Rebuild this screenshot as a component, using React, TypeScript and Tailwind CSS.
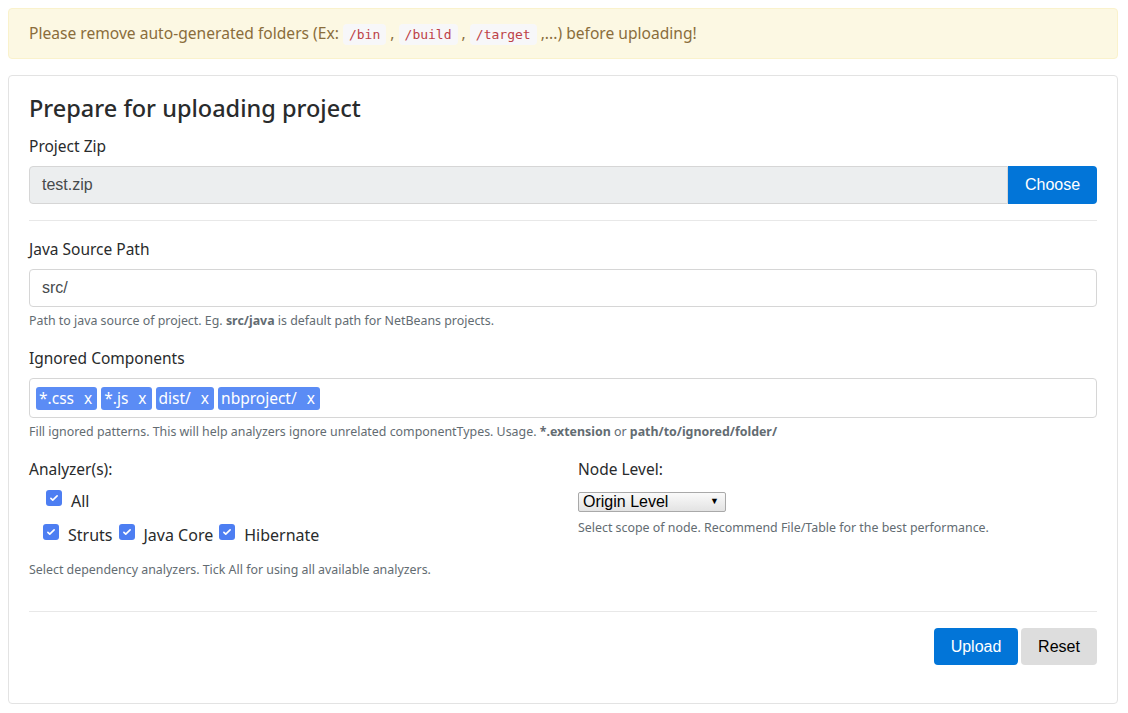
import React from 'react';

const ui = "font-['Noto_Sans',sans-serif]";
const arial = "font-['Liberation_Sans',Arial,sans-serif]";

function Code({ children }: { children: React.ReactNode }) {
  return (
    <code className="rounded bg-[#f7f7f9] px-[6px] py-[3px] font-['DejaVu_Sans_Mono',monospace] text-[13px] leading-none text-[#bd4147]">
      {children}
    </code>
  );
}

function Tag({ label }: { label: string }) {
  return (
    <span className="flex h-[23px] items-center rounded-[3px] bg-[#5b8cf5] pl-[3px] pr-[5px] text-[15.5px] leading-[23px] text-white">
      {label}
      <span className="ml-[10px]">x</span>
    </span>
  );
}

function Check({ label }: { label: string }) {
  return (
    <label className="flex items-center">
      <span className="mb-[6px] flex h-4 w-4 items-center justify-center rounded-[3px] bg-[#4d7ef2]">
        <svg viewBox="0 0 16 16" className="h-[10px] w-[10px]" fill="none" stroke="white" strokeWidth="2.6" strokeLinecap="round" strokeLinejoin="round">
          <path d="M3 8.5l3 3 7-7" />
        </svg>
      </span>
      <span className="ml-[9px] text-[16px] leading-6 text-[#292b2c]">{label}</span>
    </label>
  );
}

export default function App() {
  return (
    <div className={`${ui} min-h-[713px] bg-white pb-2 pl-2 pr-[10px] pt-2 text-[#292b2c]`}>
      {/* Warning */}
      <div className="mb-4 h-[51px] rounded border border-[#faf2cc] bg-[#fcf8e3] px-5 py-[12px] text-[15.6px] leading-6 text-[#8a6d3b]">
        Please remove auto-generated folders (Ex: <Code>/bin</Code> , <Code>/build</Code> , <Code>/target</Code> ,...) before uploading!
      </div>

      {/* Card */}
      <div className="rounded border border-[#e3e3e3] px-5 pb-[38px] pt-5">
        <h3 className="mb-[14px] text-[23.5px] font-medium leading-6 text-[#292b2c]">Prepare for uploading project</h3>

        <label className="mb-2 block text-[15.5px] leading-6">Project Zip</label>
        <div className="flex h-[38px]">
          <div className={`${arial} flex flex-1 items-center rounded-l border border-[#d6d6d6] bg-[#eceeef] px-3 text-[16px] text-[#464a4c]`}>
            test.zip
          </div>
          <button className={`${arial} w-[89px] rounded-r bg-[#0275d8] text-[16px] text-white`}>Choose</button>
        </div>

        <hr className="my-4 border-[#e8e8e8]" />

        <label className="mb-2 block text-[15.5px] leading-6">Java Source Path</label>
        <div className={`${arial} flex h-[38px] items-center rounded border border-[#d6d6d6] px-3 text-[16px] text-[#464a4c]`}>src/</div>
        <p className="mt-1 text-[12.4px] leading-[19px] text-[#636c72]">
          Path to java source of project. Eg. <b>src/java</b> is default path for NetBeans projects.
        </p>

        <label className="mb-2 mt-4 block text-[15.5px] leading-6">Ignored Components</label>
        <div className="flex h-10 items-center gap-[4px] rounded border border-[#d6d6d6] px-[6px]">
          <Tag label="*.css" />
          <Tag label="*.js" />
          <Tag label="dist/" />
          <Tag label="nbproject/" />
        </div>
        <p className="mt-1 text-[12.4px] leading-[19px] text-[#636c72]">
          Fill ignored patterns. This will help analyzers ignore unrelated componentTypes. Usage. <b>*.extension</b> or <b>path/to/ignored/folder/</b>
        </p>

        <div className="mt-4 grid grid-cols-2 gap-[30px]">
          <div>
            <label className="mb-2 block text-[15.5px] leading-6">Analyzer(s):</label>
            <div className="ml-[17px] mt-[6px]">
              <Check label="All" />
            </div>
            <div className="ml-[14px] mt-[10px] flex gap-[6px]">
              <Check label="Struts" />
              <Check label="Java Core" />
              <Check label="Hibernate" />
            </div>
            <p className="mt-[13px] text-[12.4px] leading-[19px] text-[#636c72]">
              Select dependency analyzers. Tick All for using all available analyzers.
            </p>
          </div>
          <div>
            <label className="mb-[11px] block text-[15.5px] leading-6">Node Level:</label>
            <div className={`${arial} flex h-5 w-[148px] items-center justify-between rounded-[2px] border border-[#a9a9a9] bg-gradient-to-b from-[#fafafa] to-[#e3e3e3] pl-[4px] pr-[6px] text-[16px] text-black`}>
              <span>Origin Level</span>
              <span className="text-[9px]">▼</span>
            </div>
            <p className="mt-[6px] text-[12.4px] leading-[19px] text-[#636c72]">
              Select scope of node. Recommend File/Table for the best performance.
            </p>
          </div>
        </div>

        <hr className="mb-4 mt-[32px] border-[#e8e8e8]" />

        <div className="flex justify-end gap-[3px]">
          <button className={`${arial} h-[37px] w-[84px] rounded bg-[#0275d8] text-[16px] text-white`}>Upload</button>
          <button className={`${arial} h-[37px] w-[76px] rounded bg-[#dddddd] text-[16px] text-black`}>Reset</button>
        </div>
      </div>
    </div>
  );
}
